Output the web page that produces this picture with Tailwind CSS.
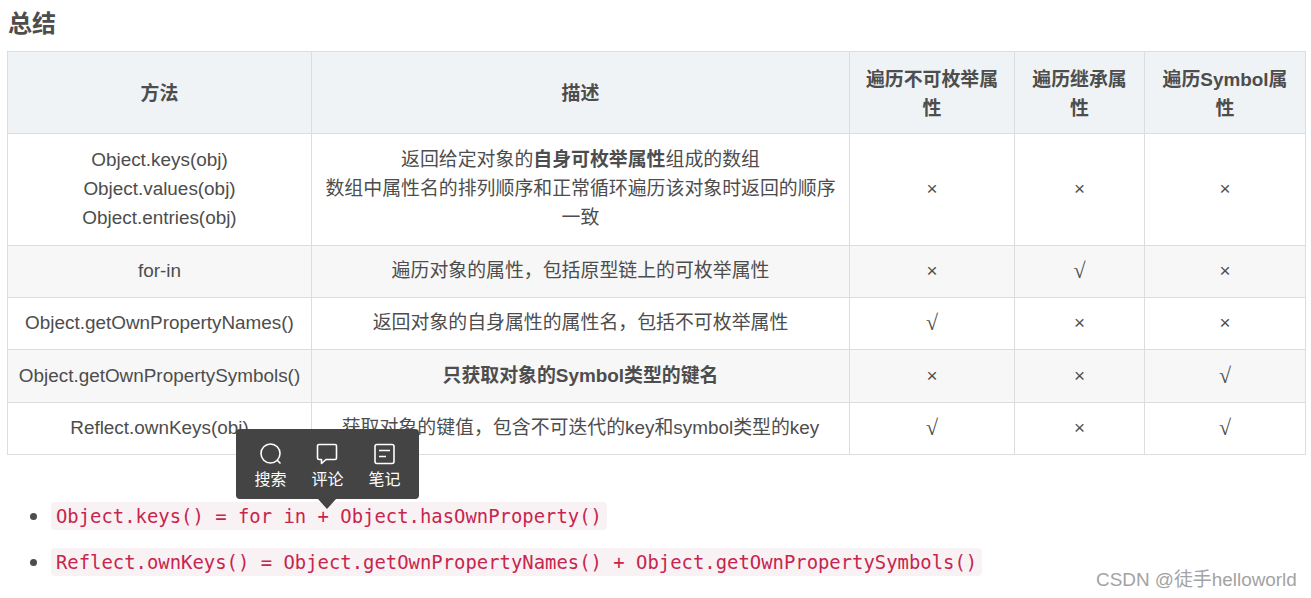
<!doctype html>
<html lang="zh-CN">
    <head>
        <meta charset="UTF-8" />
        <meta name="viewport" content="width=device-width, initial-scale=1.0" />
        <title>总结</title>
        <script src="https://cdn.jsdelivr.net/npm/@tailwindcss/browser@4"></script>
    </head>
    <body class="relative h-[598px] overflow-hidden bg-white font-['Liberation_Sans','Noto_Sans_CJK_SC',sans-serif] text-[18.9px] text-[#4d4d4d]">
        <h2 class="ml-2 pt-[8px] text-[24px] leading-8 font-bold">总结</h2>

        <div class="mt-[11px] px-[7px]">
            <table class="w-[1299px] table-fixed border-collapse text-center leading-[29px]">
                <colgroup>
                    <col class="w-[304px]" />
                    <col class="w-[538px]" />
                    <col class="w-[165px]" />
                    <col class="w-[130px]" />
                    <col class="w-[161px]" />
                </colgroup>
                <thead class="bg-[#eff3f5]">
                    <tr class="h-[82px]">
                        <th class="border border-[#dddddd] px-[10px] pt-[2px]">方法</th>
                        <th class="border border-[#dddddd] px-[10px] pt-[2px]">描述</th>
                        <th class="border border-[#dddddd] px-[10px] pt-[2px]">遍历不可枚举属性</th>
                        <th class="border border-[#dddddd] px-[10px] pt-[2px]">遍历继承属性</th>
                        <th class="border border-[#dddddd] px-[10px] pt-[2px]">遍历Symbol属性</th>
                    </tr>
                </thead>
                <tbody>
                    <tr class="h-[112px]">
                        <td class="border border-[#dddddd] px-[10px] pb-[2px]">Object.keys(obj)<br />Object.values(obj)<br />Object.entries(obj)</td>
                        <td class="border border-[#dddddd] px-[10px] pb-[2px]">返回给定对象的<strong>自身可枚举属性</strong>组成的数组<br />数组中属性名的排列顺序和正常循环遍历该对象时返回的顺序一致</td>
                        <td class="border border-[#dddddd] px-[10px] pb-[2px]">×</td>
                        <td class="border border-[#dddddd] px-[10px] pb-[2px]">×</td>
                        <td class="border border-[#dddddd] px-[10px] pb-[2px]">×</td>
                    </tr>
                    <tr class="h-[52px] bg-[#f7f7f7]">
                        <td class="border border-[#dddddd] px-[10px] pb-[2px]">for-in</td>
                        <td class="border border-[#dddddd] px-[10px] pb-[2px]">遍历对象的属性，包括原型链上的可枚举属性</td>
                        <td class="border border-[#dddddd] px-[10px] pb-[2px]">×</td>
                        <td class="border border-[#dddddd] px-[10px] pb-[2px] font-['Liberation_Serif',serif] text-[22px]">√</td>
                        <td class="border border-[#dddddd] px-[10px] pb-[2px]">×</td>
                    </tr>
                    <tr class="h-[52px]">
                        <td class="border border-[#dddddd] px-[10px] pb-[2px]">Object.getOwnPropertyNames()</td>
                        <td class="border border-[#dddddd] px-[10px] pb-[2px]">返回对象的自身属性的属性名，包括不可枚举属性</td>
                        <td class="border border-[#dddddd] px-[10px] pb-[2px] font-['Liberation_Serif',serif] text-[22px]">√</td>
                        <td class="border border-[#dddddd] px-[10px] pb-[2px]">×</td>
                        <td class="border border-[#dddddd] px-[10px] pb-[2px]">×</td>
                    </tr>
                    <tr class="h-[53px] bg-[#f7f7f7]">
                        <td class="border border-[#dddddd] px-[10px] pb-[2px]">Object.getOwnPropertySymbols()</td>
                        <td class="border border-[#dddddd] px-[10px] pb-[2px]"><strong>只获取对象的Symbol类型的键名</strong></td>
                        <td class="border border-[#dddddd] px-[10px] pb-[2px]">×</td>
                        <td class="border border-[#dddddd] px-[10px] pb-[2px]">×</td>
                        <td class="border border-[#dddddd] px-[10px] pb-[2px] font-['Liberation_Serif',serif] text-[22px]">√</td>
                    </tr>
                    <tr class="h-[52px]">
                        <td class="border border-[#dddddd] px-[10px] pb-[2px]">Reflect.ownKeys(obj)</td>
                        <td class="border border-[#dddddd] px-[10px] pb-[2px]">获取对象的键值，包含不可迭代的key和symbol类型的key</td>
                        <td class="border border-[#dddddd] px-[10px] pb-[2px] font-['Liberation_Serif',serif] text-[22px]">√</td>
                        <td class="border border-[#dddddd] px-[10px] pb-[2px]">×</td>
                        <td class="border border-[#dddddd] px-[10px] pb-[2px] font-['Liberation_Serif',serif] text-[22px]">√</td>
                    </tr>
                </tbody>
            </table>
        </div>

        <ul class="mt-[46px] ml-[51px] flex list-disc flex-col gap-[17px] leading-[28px] marker:text-[24px]">
            <li><code class="block w-fit rounded-[4px] bg-[#f9f2f4] px-[5px] font-['DejaVu_Sans_Mono',monospace] text-[#c7254e]">Object.keys() = for in + Object.hasOwnProperty()</code></li>
            <li><code class="block w-fit rounded-[4px] bg-[#f9f2f4] px-[5px] font-['DejaVu_Sans_Mono',monospace] text-[#c7254e]">Reflect.ownKeys() = Object.getOwnPropertyNames() + Object.getOwnPropertySymbols()</code></li>
        </ul>

        <!-- selection toolbar -->
        <div class="absolute top-[429px] left-[236px] flex h-[70px] w-[183px] justify-center gap-[21px] rounded-[4px] bg-[#444444] pt-[13px] text-[16px] leading-[22px] text-white">
            <div class="flex w-9 flex-col items-center gap-[3px]">
                <svg class="h-[24px] w-[24px]" viewBox="0 0 24 24" fill="none" stroke="#fff" stroke-width="1.6"><circle cx="11.5" cy="11.5" r="9.5" /><path d="M18 18l3.5 3.5" /></svg>
                <span>搜索</span>
            </div>
            <div class="flex w-9 flex-col items-center gap-[3px]">
                <svg class="h-[24px] w-[24px]" viewBox="0 0 24 24" fill="none" stroke="#fff" stroke-width="1.6" stroke-linejoin="round"><path d="M3 2.5h16a1.5 1.5 0 0 1 1.5 1.5v12a1.5 1.5 0 0 1-1.5 1.5h-9l-4.5 4v-4H3A1.5 1.5 0 0 1 1.5 16V4A1.5 1.5 0 0 1 3 2.5z" /></svg>
                <span>评论</span>
            </div>
            <div class="flex w-9 flex-col items-center gap-[3px]">
                <svg class="h-[24px] w-[24px]" viewBox="0 0 24 24" fill="none" stroke="#fff" stroke-width="1.6"><rect x="2" y="2.5" width="19" height="19" rx="2" /><path d="M6 8.5h11M6 14.5h7" /></svg>
                <span>笔记</span>
            </div>
            <div class="absolute top-[70px] left-[82px] h-0 w-0 border-x-[9px] border-t-[10px] border-x-transparent border-t-[#444444]"></div>
        </div>

        <div class="absolute top-[568px] left-[1096px] leading-6 whitespace-nowrap text-[#a3a3a3]">CSDN @徒手helloworld</div>
    </body>
</html>
